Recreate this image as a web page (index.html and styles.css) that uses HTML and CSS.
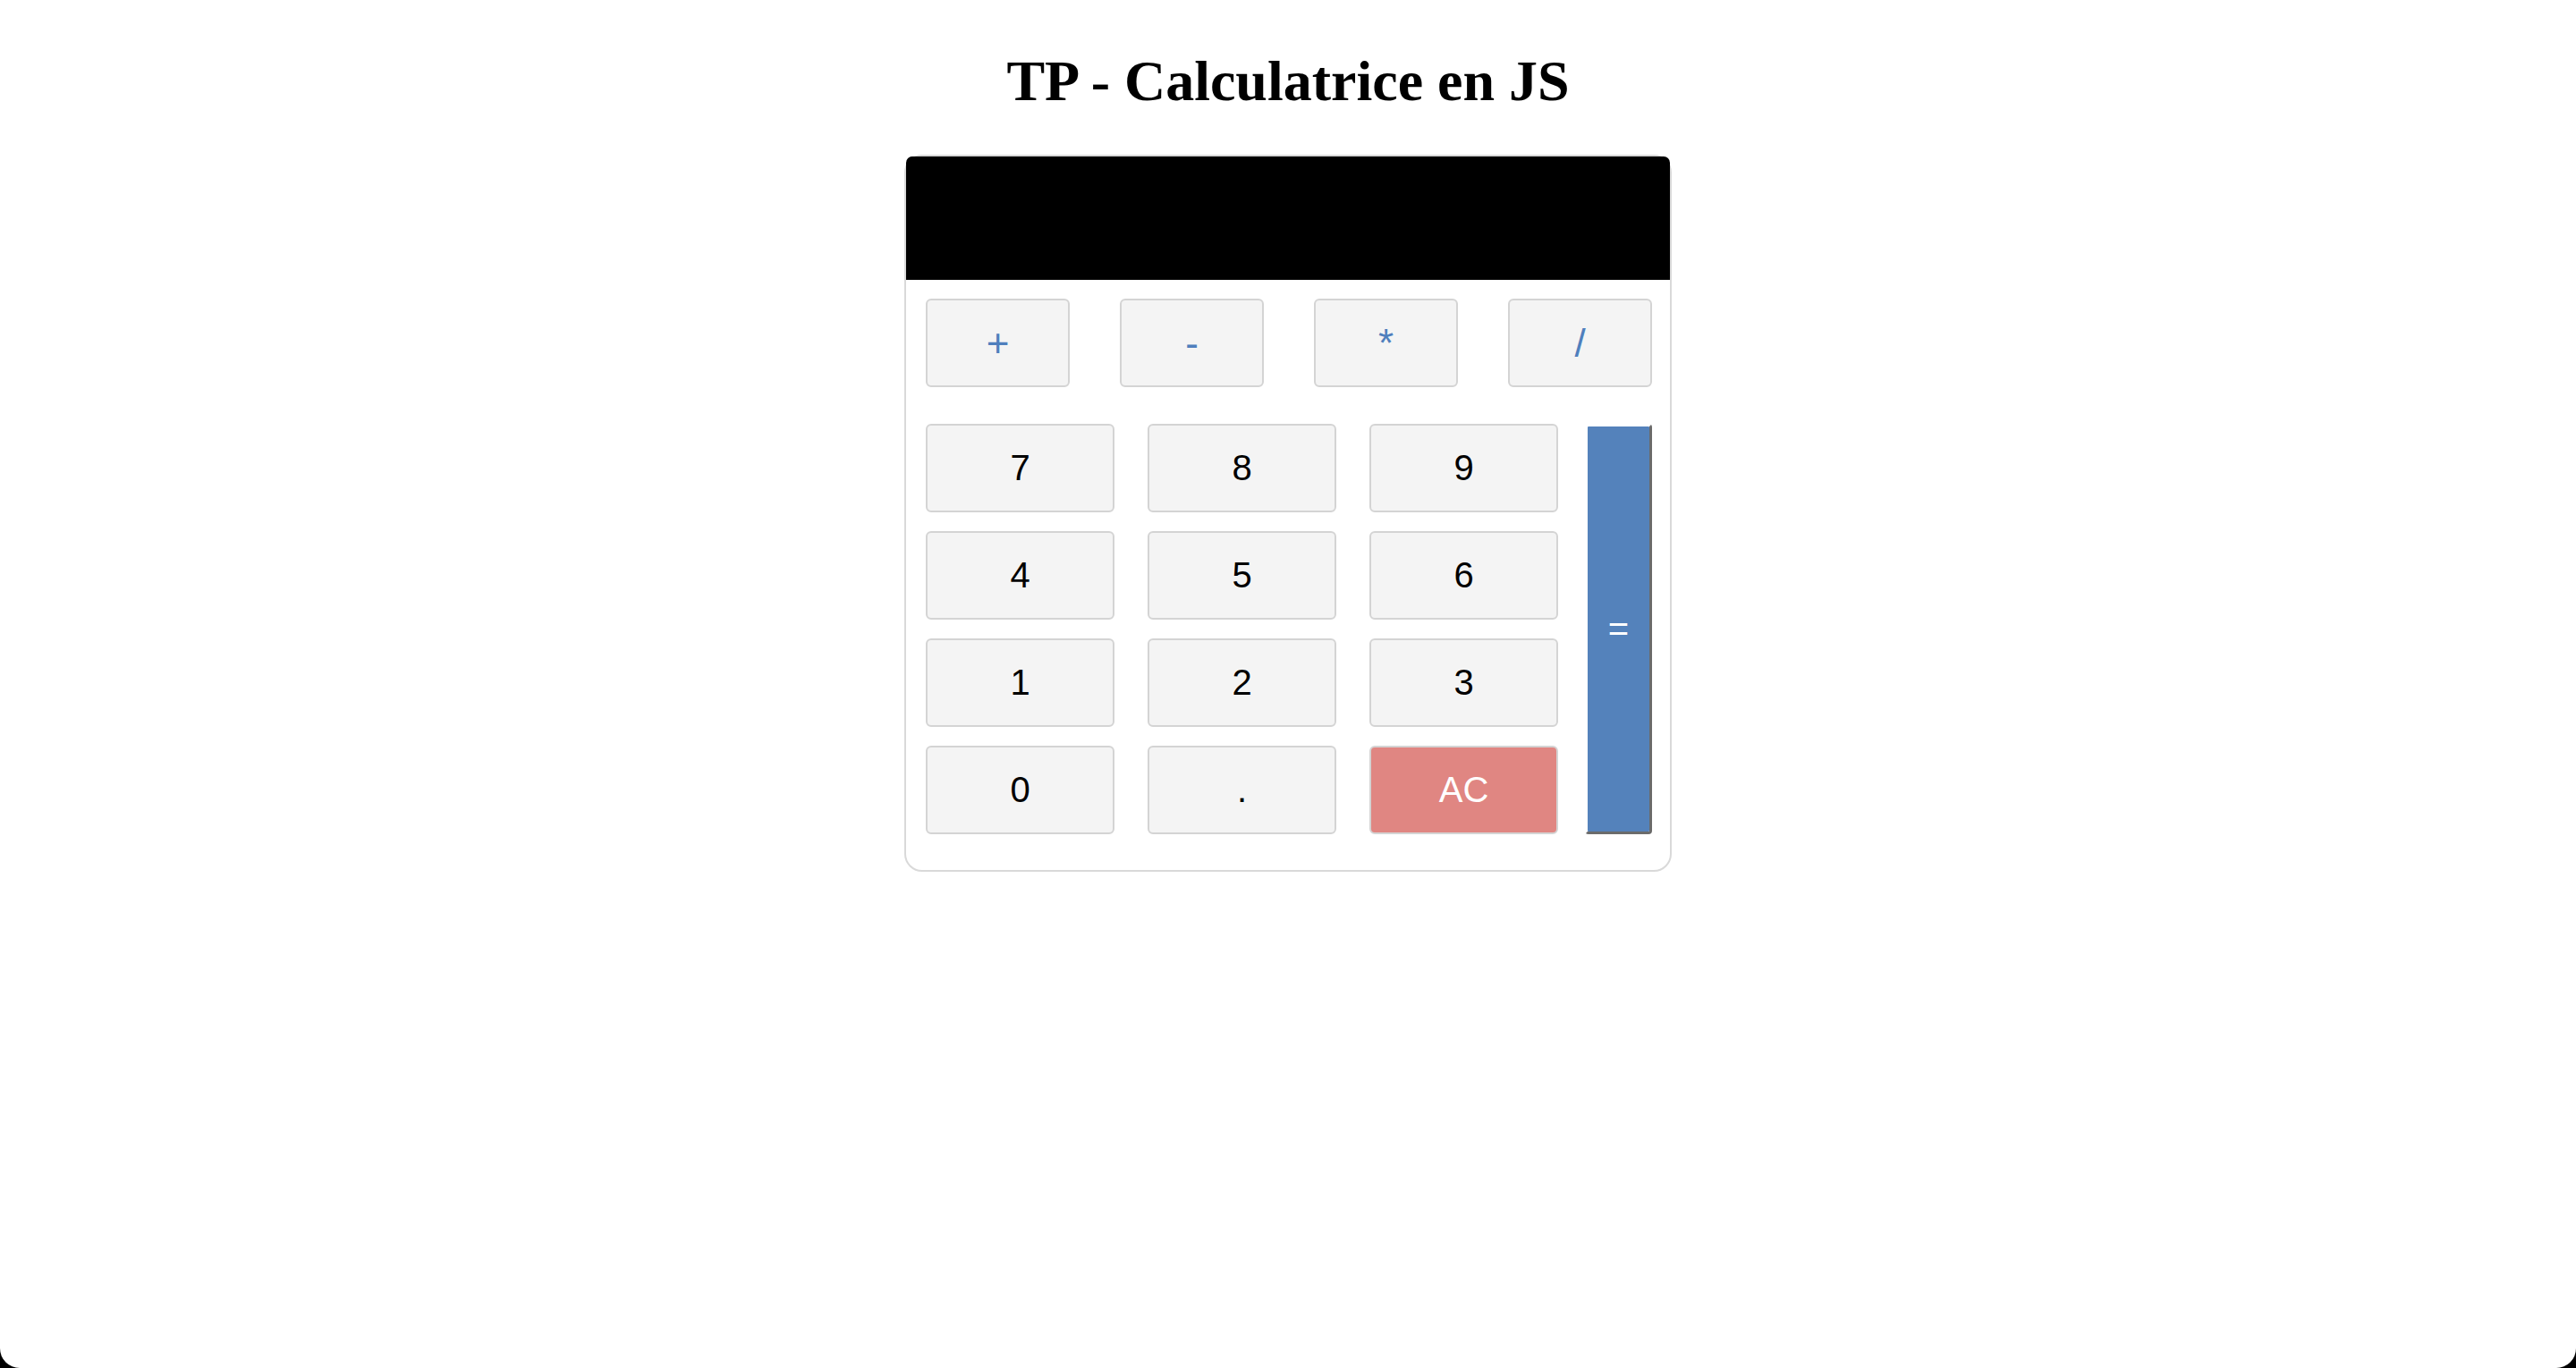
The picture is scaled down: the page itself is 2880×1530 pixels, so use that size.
FILE: index.html
```html
<!DOCTYPE html>
<html lang="fr">
<head>
<meta charset="utf-8">
<title>TP - Calculatrice en JS</title>
<link rel="stylesheet" href="styles.css">
</head>
<body>
<h1 class="title">TP - Calculatrice en JS</h1>
<div class="calc">
  <div class="screen"></div>
  <div class="keys">
    <div class="ops">
      <button class="key op">+</button>
      <button class="key op">-</button>
      <button class="key op">*</button>
      <button class="key op">/</button>
    </div>
    <div class="pad">
      <div class="digits">
        <button class="key">7</button>
        <button class="key">8</button>
        <button class="key">9</button>
        <button class="key">4</button>
        <button class="key">5</button>
        <button class="key">6</button>
        <button class="key">1</button>
        <button class="key">2</button>
        <button class="key">3</button>
        <button class="key">0</button>
        <button class="key">.</button>
        <button class="key clear">AC</button>
      </div>
      <button class="key equals">=</button>
    </div>
  </div>
</div>
</body>
</html>
```

FILE: styles.css
```css
* {
  box-sizing: border-box;
}

html {
  background: #000;
}

body {
  margin: 0;
  height: 1530px;
  padding-top: 55px;
  background: #fff;
  border-radius: 0 0 22px 22px;
  overflow: hidden;
}

.title {
  margin: 0 0 46px;
  font-family: "Liberation Serif", "Times New Roman", serif;
  font-size: 64px;
  font-weight: bold;
  line-height: 72px;
  text-align: center;
  color: #000;
}

.calc {
  width: 858px;
  margin: 0 auto;
  border: 2px solid #d9d9d9;
  border-radius: 20px;
}

.screen {
  height: 138px;
  background: #000;
  border-radius: 7px 7px 0 0;
}

.keys {
  padding: 21px 20px 40px 22px;
}

.ops {
  display: flex;
  justify-content: space-between;
  margin-bottom: 41px;
}

.key {
  display: flex;
  align-items: center;
  justify-content: center;
  height: 99px;
  padding: 0;
  font-family: "Liberation Sans", Arial, sans-serif;
  font-size: 40px;
  color: #000;
  background: #f4f4f4;
  border: 2px solid #d4d4d4;
  border-radius: 6px;
}

.op {
  width: 161px;
  font-size: 44px;
  color: #4f7fbd;
}

.pad {
  display: flex;
  gap: 30px;
}

.digits {
  display: grid;
  grid-template-columns: repeat(3, 211px);
  grid-auto-rows: 99px;
  column-gap: 37px;
  row-gap: 21px;
}

.clear {
  background: #e08682;
  color: #fff;
}

.equals {
  width: 75px;
  height: auto;
  color: #fff;
  background: #5482bb;
  background-clip: padding-box;
  border-width: 3px;
  border-style: solid;
  border-color: transparent #6b6b6b #6b6b6b transparent;
  border-radius: 4px;
}
```
